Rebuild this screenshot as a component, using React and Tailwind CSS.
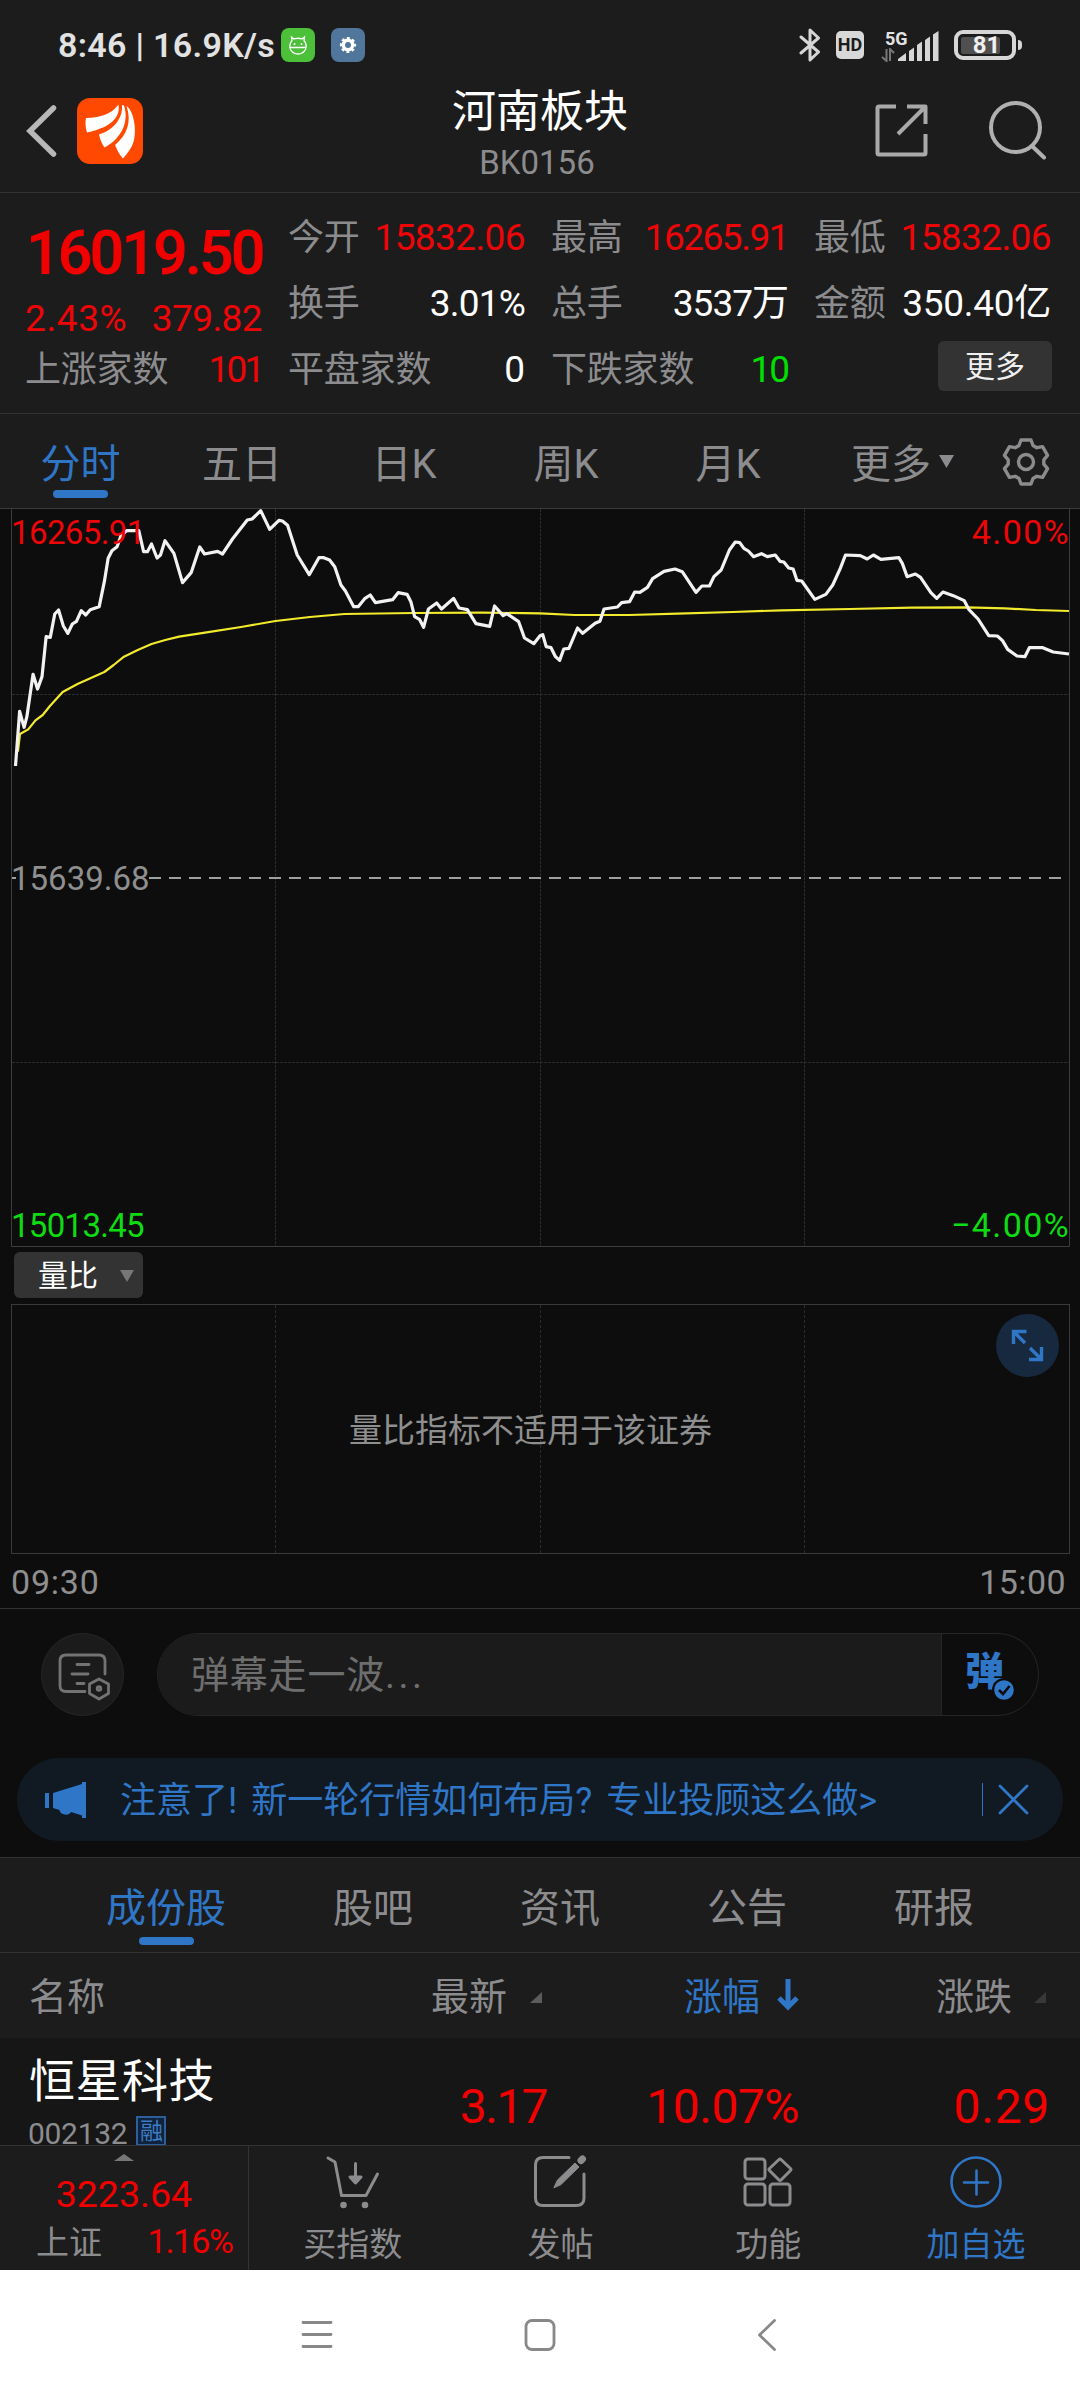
import React from "react";

const PRICE_LINE =
  "45,828 57,664 70,712 78,680 96,553 109,597 122,560 134,440 146,442 159,372 170,360 184,408 197,430 210,402 222,394 236,362 249,375 262,359 288,350 303,275 314,205 325,182 340,170 352,135 368,122 403,122 417,185 428,185 440,162 456,204 466,195 479,152 505,190 530,278 555,248 580,171 594,192 632,184 646,192 675,147 718,90 732,87 757,62 783,118 810,91 820,93 835,106 863,195 898,254 926,203 940,203 957,210 972,230 990,285 1003,303 1027,350 1040,350 1060,325 1075,315 1090,338 1140,329 1156,308 1182,313 1193,335 1204,380 1218,388 1230,412 1244,357 1268,339 1282,357 1317,325 1333,354 1357,359 1382,401 1422,409 1436,348 1461,377 1472,371 1506,395 1523,444 1550,461 1568,437 1576,434 1586,470 1600,473 1613,500 1625,511 1637,477 1652,475 1677,414 1692,430 1728,400 1742,394 1754,357 1793,351 1805,338 1828,335 1843,306 1858,307 1880,292 1895,266 1928,244 1960,237 1981,245 2021,307 2038,288 2060,288 2073,260 2094,240 2118,180 2135,156 2148,158 2160,175 2173,183 2188,200 2211,191 2228,200 2251,195 2265,214 2276,216 2290,234 2303,237 2314,271 2328,273 2366,328 2398,313 2418,285 2440,235 2455,195 2498,197 2518,207 2536,195 2558,208 2610,203 2620,220 2634,260 2658,252 2673,262 2703,308 2720,325 2738,306 2768,317 2800,332 2813,358 2840,387 2871,437 2896,438 2911,452 2926,478 2953,498 2976,500 2989,473 3028,473 3058,486 3104,492";

const AVERAGE_LINE =
  "52,785 58,732 82,718 103,691 124,675 145,648 182,606 225,582 303,546 330,525 360,500 400,480 440,462 480,450 520,440 600,427 700,411 800,393 900,381 1000,372 1200,369 1400,368 1568,370 1668,375 1828,375 1968,371 2128,366 2268,361 2468,357 2648,353 2808,352 2918,355 3008,360 3104,363";

function gearPath() {
  const pts = [];
  for (let k = 0; k < 6; k++) {
    const a = (k * Math.PI) / 3;
    [
      [-7, -16.5],
      [-5, -22],
      [5, -22],
      [7, -16.5],
    ].forEach(([x, y]) => {
      pts.push(`${(x * Math.cos(a) - y * Math.sin(a)).toFixed(2)} ${(x * Math.sin(a) + y * Math.cos(a)).toFixed(2)}`);
    });
  }
  return `M${pts.join("L")}Z`;
}

function StatusBar() {
  return (
    <div className="flex h-[78px] shrink-0 items-center pt-3 pl-[58px] pr-[58px] text-[#e2e2e2]">
      <span className="w-[215px] text-[34px] leading-none font-semibold tracking-[0.3px] whitespace-nowrap">8:46 | 16.9K/s</span>
      <svg className="ml-2 size-[34px]" viewBox="0 0 34 34">
        <rect width="34" height="34" rx="8" fill="#4cc038" />
        <g fill="none" stroke="#fff" strokeWidth="1.3">
          <path d="M11 12.500 L10.500 9 L13 11 Q17 9.500 21 11 L23.500 9 L23 12.500 Q26.500 17 24.500 21.500 Q22 26 17 26 Q12 26 9.500 21.500 Q7.500 17 11 12.500Z M9 19.500 H25" />
        </g>
        <circle cx="13.500" cy="16" r="1" fill="#fff" />
        <circle cx="20.500" cy="16" r="1" fill="#fff" />
      </svg>
      <svg className="ml-4 size-[34px]" viewBox="0 0 34 34">
        <rect width="34" height="34" rx="8" fill="#50779b" />
        <circle cx="17" cy="17" r="4.700" fill="none" stroke="#fff" strokeWidth="3.400" />
        <circle cx="17" cy="17" r="6.900" fill="none" stroke="#fff" strokeWidth="2.400" strokeDasharray="2.900 2.520" strokeDashoffset="1.400" />
      </svg>
      <svg className="ml-auto h-[36px] w-[22px]" viewBox="0 0 22 36" fill="none" stroke="#d6d6d6" strokeWidth="3" strokeLinejoin="round" strokeLinecap="round">
        <path d="M2 10 L19.500 25 L11 33 V3 L19.500 11 L2 26" />
      </svg>
      <span className="ml-[15px] flex h-[28px] w-[28px] items-center justify-center rounded-[5px] bg-[#d8d8d8] text-[18px] leading-none font-bold text-[#1c1c1c]">HD</span>
      <div className="ml-[17px] flex h-[34px] w-[60px] items-end">
        <div className="flex w-[18px] flex-col">
          <span className="w-[30px] pl-1 text-[18px] leading-none font-bold">5G</span>
          <svg className="h-[14px] w-[14px]" viewBox="0 0 14 14" fill="none" stroke="#777" strokeWidth="2">
            <path d="M5.500 1 V13 L1 9 M9 13 V1 L13 5" />
          </svg>
        </div>
        <svg className="-ml-px h-[31px] w-[42px]" viewBox="0 0 42 31" fill="#d6d6d6">
          <path d="M0 30 V28 L8 22 V30Z M11 20 L16 16.500 V30 H11Z M19 14 L24 10.500 V30 H19Z M27 9 L32 5.500 V30 H27Z M35 3.500 L40.500 0 V30 H35Z" />
        </svg>
      </div>
      <div className="ml-[13px] flex items-center">
        <div className="flex h-[30px] w-[62px] items-center rounded-[9px] border-4 border-[#d6d6d6] pl-[3px]">
          <div className="flex h-[17px] w-[39px] items-center justify-center rounded-[2px] bg-[#505050]">
            <span className="pl-[12px] text-[24px] leading-none font-bold text-[#f0f0f0]">81</span>
          </div>
        </div>
        <div className="ml-[2px] h-[10px] w-1 rounded-r-sm bg-[#d6d6d6]" />
      </div>
    </div>
  );
}

function Header() {
  return (
    <header className="flex h-[193px] flex-col border-b border-[#333]">
      <StatusBar />
      <div className="grid h-[114px] grid-cols-3">
        <div className="flex items-start pt-[20px] pl-[25px]">
          <svg className="mt-[7px] h-[52px] w-[32px]" viewBox="0 0 32 52" fill="none" stroke="#b8b8b8" strokeWidth="5.500">
            <path d="M28.500 3 L5 26 L28.500 49" strokeLinecap="round" />
          </svg>
          <svg className="ml-[20px] size-[66px]" viewBox="0 0 66 66">
            <rect width="66" height="66" rx="13" fill="#ff4800" />
            <g fill="#fff">
              <path d="M9 20 C22 19.500 34 17 41.500 6.500 C43.500 18 36 29 10 34.500 C8.500 30 8 24 9 20Z" />
              <path d="M45 7 C46 20 37 32 22 36.500 C23 41 25 46 27.500 49.500 C42 42 53 26 47 7.500Z" />
              <path d="M49.500 8 C56 12 60 30 57 42 C55 50 50 56 46 60.500 C42 56 40 52 38 47 C50 37 55 24 49.500 8Z" />
            </g>
          </svg>
        </div>
        <div className="flex flex-col items-center pt-[11px]">
          <h1 className="text-[44px] leading-[46px] font-normal text-white">河南板块</h1>
          <span className="mt-[11px] mr-[6px] text-[33px] leading-none text-[#8c8c8e]">BK0156</span>
        </div>
        <div className="flex items-start justify-end pt-[22px] pr-[33px]">
          <svg className="mt-[3px] h-[56px] w-[56px]" viewBox="0 0 56 56" fill="none" stroke="#a9a9a9" strokeWidth="4" strokeLinejoin="round">
            <path d="M22 3.500 H5 Q3.500 3.500 3.500 5 V50 Q3.500 51.500 5 51.500 H50 Q51.500 51.500 51.500 50 V31" />
            <path d="M33 3.500 H51.500 V21 M51 4 L24 31" />
          </svg>
          <svg className="ml-[57px] h-[60px] w-[60px]" viewBox="0 0 60 60" fill="none" stroke="#b0b0b0" strokeWidth="4" strokeLinecap="round">
            <circle cx="28.500" cy="27.500" r="24.500" />
            <path d="M45 46 L57 57.500" />
          </svg>
        </div>
      </div>
    </header>
  );
}

function Stat({ label, value, className }) {
  return (
    <div className="flex h-[66px] items-center justify-between leading-none whitespace-nowrap">
      <span className="-ml-px pt-[2px] text-[36px] tracking-[-0.2px] text-[#8c8c8f]">{label}</span>
      <span className={className}>{value}</span>
    </div>
  );
}

function Quote() {
  return (
    <section className="grid h-[221px] grid-cols-4 gap-x-[27px] border-b border-[#333] pt-[11px] pr-[29px] pl-[26px] leading-none">
      <div>
        <div className="flex h-[96px] items-center pt-[2px] text-[61px] font-semibold tracking-[-3.1px] whitespace-nowrap text-[#f20000]">16019.50</div>
        <div className="flex h-[36px] items-center justify-between text-[37px] text-[#ee0508]">
          <span className="-ml-px tracking-[0.6px]">2.43%</span>
          <span className="tracking-[-0.6px]">379.82</span>
        </div>
        <Stat label="上涨家数" value="101" className="text-[37px] tracking-[-3px] text-[#ee0508]" />
      </div>
      <div>
        <Stat label="今开" value="15832.06" className="text-[37px] tracking-[-0.6px] text-[#ee0508]" />
        <Stat label="换手" value="3.01%" className="text-[37px] tracking-[-0.8px] text-white" />
        <Stat label="平盘家数" value="0" className="text-[37px] text-white" />
      </div>
      <div>
        <Stat label="最高" value="16265.91" className="text-[37px] tracking-[-1.5px] text-[#ee0508]" />
        <Stat label="总手" value="3537万" className="text-[37px] tracking-[-1px] text-white" />
        <Stat label="下跌家数" value="10" className="text-[37px] tracking-[-2px] text-[#00e000]" />
      </div>
      <div>
        <Stat label="最低" value="15832.06" className="text-[37px] tracking-[-0.6px] text-[#ee0508]" />
        <Stat label="金额" value="350.40亿" className="text-[37px] tracking-[-0.3px] text-white" />
        <div className="flex justify-end pt-[5px]">
          <button className="-mr-px h-[50px] w-[114px] rounded-[6px] bg-[#333] pt-[2px] text-[30px] leading-none text-[#f0f0f0]">更多</button>
        </div>
      </div>
    </section>
  );
}

function PeriodTabs() {
  return (
    <nav className="flex h-[94px] text-[40px] leading-none text-[#8c8c8f]">
      <div className="flex w-[161px] flex-col items-center pt-[31px] text-[#2f76c7]">
        <span>分时</span>
        <span className="mt-[5px] h-2 w-[55px] rounded-full bg-[#2f76c7]" />
      </div>
      {["五日", "日K", "周K", "月K"].map((t) => (
        <div key={t} className="flex w-[162px] justify-center pt-[31px]">{t}</div>
      ))}
      <div className="flex w-[162px] items-start pt-[31px] pl-[42px]">
        <span>更多</span>
        <svg className="mt-[10px] ml-2 h-[13px] w-[15px]" viewBox="0 0 15 13" fill="#8c8c8f">
          <path d="M0 0 H15 L7.500 13Z" />
        </svg>
      </div>
      <div className="flex w-[109px] justify-center pt-[23px]">
        <svg className="size-[50px]" viewBox="-25 -25 50 50" fill="none" stroke="#8c8c8f" strokeWidth="3.400" strokeLinejoin="round">
          <path d={gearPath()} />
          <circle r="7.500" />
        </svg>
      </div>
    </nav>
  );
}

function PriceChart() {
  return (
    <div className="relative h-[739px] text-[33px] leading-none">
      <svg className="block h-[739px] w-[1080px]" viewBox="0 508 1080 739" fill="none">
        <g stroke="#2c2c2c" strokeDasharray="3 1">
          <path d="M275.500 509 V1246 M540.500 509 V1246 M804.500 509 V1246 M12 694.500 H1069 M12 1062.500 H1069" />
        </g>
        <path d="M0 508.500 H1080" stroke="#3a3a3a" />
        <path d="M11.500 508 V1246.500 H1069.500 V508" stroke="#3d3d3d" />
        <path d="M12 878 H16 M149 878 H1062" stroke="#a0a0a0" strokeWidth="2" strokeDasharray="12 8" />
        <svg x="0" y="490" width="1080" height="290" viewBox="0 0 3136 870" preserveAspectRatio="none">
          <polyline points={AVERAGE_LINE} stroke="#f2ea2c" strokeWidth="2.200" vectorEffect="non-scaling-stroke" strokeLinejoin="round" />
          <polyline points={PRICE_LINE} stroke="#f2f2f2" strokeWidth="3.200" vectorEffect="non-scaling-stroke" strokeLinejoin="round" />
        </svg>
      </svg>
      <span className="absolute top-[8px] left-[11px] tracking-[-0.6px] text-[#ee0508]">16265.91</span>
      <span className="absolute top-[7px] right-[10px] text-[34px] tracking-[1.4px] text-[#ee0508]">4.00%</span>
      <span className="absolute top-[354px] left-[11px] text-[#8f8f8f]">15639.68</span>
      <span className="absolute top-[701px] left-[11px] tracking-[-0.7px] text-[#0fdc12]">15013.45</span>
      <span className="absolute top-[700px] right-[10px] text-[34px] tracking-[1.4px] text-[#0fdc12]">−4.00%</span>
    </div>
  );
}

function VolumePanel() {
  return (
    <div className="h-[362px] border-b border-[#333] px-[11px] leading-none">
      <div className="flex h-[57px] pt-[5px] pl-[3px]">
        <button className="flex h-[46px] w-[129px] items-center rounded-[6px] bg-[#333] pt-px pl-[24px] text-[30px] leading-none text-white">
          量比
          <svg className="ml-[22px] h-[12px] w-[14px]" viewBox="0 0 14 12" fill="#777">
            <path d="M0 0 H14 L7 12Z" />
          </svg>
        </button>
      </div>
      <div className="relative grid h-[250px] w-[1059px] grid-cols-4 border border-[#3a3a3a]">
        <div className="border-r border-dashed border-[#2c2c2c]" />
        <div className="border-r border-dashed border-[#2c2c2c]" />
        <div className="border-r border-dashed border-[#2c2c2c]" />
        <p className="absolute top-[109px] left-[337px] text-[33px] whitespace-nowrap text-[#8f8f8f]">量比指标不适用于该证券</p>
        <svg className="absolute top-[9px] right-[10px] size-[63px]" viewBox="0 0 63 63" fill="none" stroke="#2f76c7" strokeWidth="3.400">
          <circle cx="31.500" cy="31.500" r="31.500" fill="#17293f" stroke="none" />
          <path d="M17.500 30 V17.500 H30.500 M18 18 L29 29 M33 45.500 H45.500 V33 M45 45 L34 34" />
        </svg>
      </div>
      <div className="flex justify-between pt-[11px] pr-[3px] text-[34px] text-[#8f8f8f]">
        <span className="tracking-[0.8px]">09:30</span>
        <span className="tracking-[0.4px]">15:00</span>
      </div>
    </div>
  );
}

function CommentBar() {
  return (
    <div className="flex pt-6 pl-[41px]">
      <div className="flex size-[83px] items-center justify-center rounded-full border border-[#262626] bg-[#1b1b1b]">
        <svg className="size-[84px] shrink-0" viewBox="0 0 84 84" fill="none" stroke="#737373" strokeWidth="2.800" strokeLinecap="round" strokeLinejoin="round">
          <path d="M44 58.500 H25 Q19 58.500 19 52.500 V28 Q19 22 25 22 H58 Q64 22 64 28 V41 M36 31.500 H48 M31 41 H47 M36 50.500 H43" />
          <path d="M58 46 L67.500 51 V60.500 L58 66 L48.500 60.500 V51Z" />
          <circle cx="58" cy="55.500" r="1.800" />
        </svg>
      </div>
      <div className="ml-[33px] flex h-[83px] w-[882px] overflow-hidden rounded-full border border-[#262626]">
        <div className="flex w-[784px] items-center border-r border-[#262626] bg-[#1b1b1b] pt-px pl-[33px] text-[38px] leading-none tracking-[0.8px] text-[#6e6e6e]">
          弹幕走一波<span className="tracking-[3.5px]">...</span>
        </div>
        <div className="relative pt-[19px] pl-[23px]">
          <span className="block text-[39px] leading-none font-black text-[#2f76c7]">弹</span>
          <svg className="absolute top-[44px] left-[50px] size-6" viewBox="0 0 24 24">
            <circle cx="12" cy="12" r="12" fill="#0d0d0d" />
            <circle cx="12" cy="12" r="9.800" fill="#2f76c7" />
            <path d="M7 12 L11 16 L17.500 8" fill="none" stroke="#0d0d0d" strokeWidth="2.600" />
          </svg>
        </div>
      </div>
    </div>
  );
}

function Notice() {
  return (
    <div className="mt-[42px] ml-[17px] flex h-[83px] w-[1046px] items-center rounded-full bg-[#111a22] pl-[28px] text-[#2f76c7]">
      <svg className="h-[36px] w-[42px]" viewBox="0 0 42 36" fill="currentColor">
        <path d="M0 11 H4 V26 H0Z M8 11 L37 2 V0 H41 V36 H37 V33.500 L26 30 C24 34.500 15 33 14.500 28 L8 26Z" />
      </svg>
      <span className="ml-[33px] pt-[3px] text-[36px] leading-none [word-spacing:5px] whitespace-nowrap">注意了! 新一轮行情如何布局? 专业投顾这么做&gt;</span>
      <span className="ml-auto h-[33px] w-px bg-[#2f76c7]" />
      <svg className="mr-[34px] ml-[15px] size-[31px]" viewBox="0 0 31 31" fill="none" stroke="currentColor" strokeWidth="2.800" strokeLinecap="round">
        <path d="M2 2 L29 29 M29 2 L2 29" />
      </svg>
    </div>
  );
}

function SectionTabs() {
  return (
    <nav className="mt-4 flex h-[96px] justify-between border-y border-[#333] bg-[#1c1c1c] px-[106px] pt-[31px] text-[40px] leading-none text-[#8c8c8f]">
      <div className="flex flex-col items-center text-[#2f76c7]">
        <span>成份股</span>
        <span className="mt-[8px] h-2 w-[55px] rounded-full bg-[#2f76c7]" />
      </div>
      {["股吧", "资讯", "公告", "研报"].map((t) => (
        <span key={t}>{t}</span>
      ))}
    </nav>
  );
}

function Corner({ color }) {
  return (
    <svg className="h-[11px] w-[12px]" viewBox="0 0 12 11">
      <path d="M12 0 V11 H0Z" fill={color} />
    </svg>
  );
}

function StockTable() {
  return (
    <section>
      <div className="grid h-[85px] grid-cols-[400px_142px_257px_281px] items-center bg-[#1c1c1c] pt-[3px] text-[38px] leading-none text-[#8c8c8f]">
        <span className="pl-[29px]">名称</span>
        <div className="flex items-center justify-end gap-[23px]">
          <span className="whitespace-nowrap">最新</span>
          <Corner color="#5c5c5c" />
        </div>
        <div className="flex items-center justify-end gap-[17px] text-[#2f76c7]">
          <span>涨幅</span>
          <svg className="-mt-[4px] h-[32px] w-[22px]" viewBox="0 0 22 32" fill="none" stroke="currentColor" strokeWidth="5">
            <path d="M11 0 V28 M2 19 L11 28 L20 19" />
          </svg>
        </div>
        <div className="flex items-center justify-end gap-[22px] pr-[34px]">
          <span>涨跌</span>
          <Corner color="#383838" />
        </div>
      </div>
      <div className="grid h-[107px] grid-cols-[400px_147px_252px_251px] bg-[#161616] leading-none">
        <div className="pt-[20px] pl-[29px]">
          <div className="text-[46px] tracking-[0.5px] text-white">恒星科技</div>
          <div className="mt-[12px] flex text-[30px]">
            <span className="mt-[3px] -ml-px tracking-[-0.3px] text-[#8c8c8f]">002132</span>
            <span className="ml-[9px] flex size-[30px] items-center justify-center border-2 border-[#2c5f9c] bg-[#10233c] text-[23px] text-[#3f7cc4]">融</span>
          </div>
        </div>
        <div className="pt-[45px] text-right text-[48px] tracking-[-1.6px] text-[#f20000]">3.17</div>
        <div className="pt-[45px] text-right text-[48px] tracking-[-0.5px] text-[#f20000]">10.07%</div>
        <div className="pt-[45px] text-right text-[48px] tracking-[0.7px] text-[#f20000]">0.29</div>
      </div>
    </section>
  );
}

function Action({ label, active, children }) {
  return (
    <div className={active ? "flex w-[208px] flex-col items-center pt-[8px] text-[#2f76c7]" : "flex w-[208px] flex-col items-center pt-[8px] text-[#8c8c8f]"}>
      <svg className="size-[56px]" viewBox="0 0 56 56" fill="none" stroke="currentColor" strokeWidth="3" strokeLinecap="round" strokeLinejoin="round">
        {children}
      </svg>
      <span className="mt-[18px] text-[33px] leading-none">{label}</span>
    </div>
  );
}

function BottomBar() {
  return (
    <footer className="flex h-[125px] border-t border-[#333] bg-[#1c1c1c] leading-none">
      <div className="flex w-[249px] flex-col border-r border-[#333]">
        <svg className="mt-[8px] ml-[114px] h-[7px] w-[20px]" viewBox="0 0 20 7" fill="#777">
          <path d="M0 7 L10 0 L20 7Z" />
        </svg>
        <span className="mt-[15px] text-center text-[37.5px] text-[#f20000]">3223.64</span>
        <div className="mt-[10px] flex items-center justify-between pr-[15px] pl-[36px]">
          <span className="pt-[2px] text-[33px] text-[#8c8c8f]">上证</span>
          <span className="text-[34px] tracking-[-1.2px] text-[#f20000]">1.16%</span>
        </div>
      </div>
      <Action label="买指数">
        <path d="M3 4 L10 8 L16.500 41.500 H41 L52.500 20" />
        <path d="M30.500 9.500 V22" />
        <path d="M25 23 H36 L30.500 29Z" fill="currentColor" />
        <circle cx="18.500" cy="51" r="1.800" fill="currentColor" />
        <circle cx="40" cy="51" r="1.800" fill="currentColor" />
      </Action>
      <Action label="发帖">
        <path d="M37 3.500 H11 Q3.500 3.500 3.500 11 V44 Q3.500 51.500 11 51.500 H44 Q52 51.500 52 44 V20" />
        <path d="M49 6.500 L50.500 5" strokeWidth="7" />
        <path d="M22 33.500 L25.500 26 L43 9 L47 13 L29 30.500Z" fill="currentColor" strokeWidth="1" />
      </Action>
      <Action label="功能">
        <rect x="5" y="5" width="20" height="20" rx="3" />
        <rect x="5" y="30" width="20" height="21" rx="3" />
        <rect x="30" y="30" width="20" height="21" rx="3" />
        <path d="M39 5.500 Q40 4.500 41 5.500 L50.500 14.500 Q51.500 15.500 50.500 16.500 L41 26 Q40 27 39 26 L29.500 16.500 Q28.500 15.500 29.500 14.500Z" />
      </Action>
      <Action label="加自选" active>
        <circle cx="28" cy="28" r="24.500" strokeWidth="2.600" />
        <path d="M16 28.500 H40 M28.500 16.500 V40.500" strokeWidth="2.600" />
      </Action>
    </footer>
  );
}

function SystemNav() {
  return (
    <div className="flex h-[130px] items-center bg-white">
      <svg className="ml-[300px] size-[34px]" viewBox="0 0 34 34" fill="none" stroke="#888" strokeWidth="2.800" strokeLinecap="round">
        <path d="M3 4.500 H31 M3 16.500 H31 M3 28.500 H31" />
      </svg>
      <svg className="ml-[189px] size-[34px]" viewBox="0 0 34 34" fill="none" stroke="#888" strokeWidth="2.800">
        <rect x="3" y="2.500" width="28" height="29" rx="6" />
      </svg>
      <svg className="ml-[193px] size-[34px]" viewBox="0 0 34 34" fill="none" stroke="#888" strokeWidth="2.800" strokeLinecap="round" strokeLinejoin="round">
        <path d="M24.500 2.500 L9.500 17 L24.500 31.500" />
      </svg>
    </div>
  );
}

export default function App() {
  return (
    <div lang="zh-CN" className="flex h-[2400px] w-[1080px] flex-col overflow-hidden bg-[#0d0d0d] [font-family:Roboto,'Noto_Sans_CJK_SC',sans-serif]">
      <div className="bg-[#1c1c1c]">
        <Header />
        <Quote />
        <PeriodTabs />
      </div>
      <PriceChart />
      <VolumePanel />
      <CommentBar />
      <Notice />
      <SectionTabs />
      <StockTable />
      <BottomBar />
      <SystemNav />
    </div>
  );
}
